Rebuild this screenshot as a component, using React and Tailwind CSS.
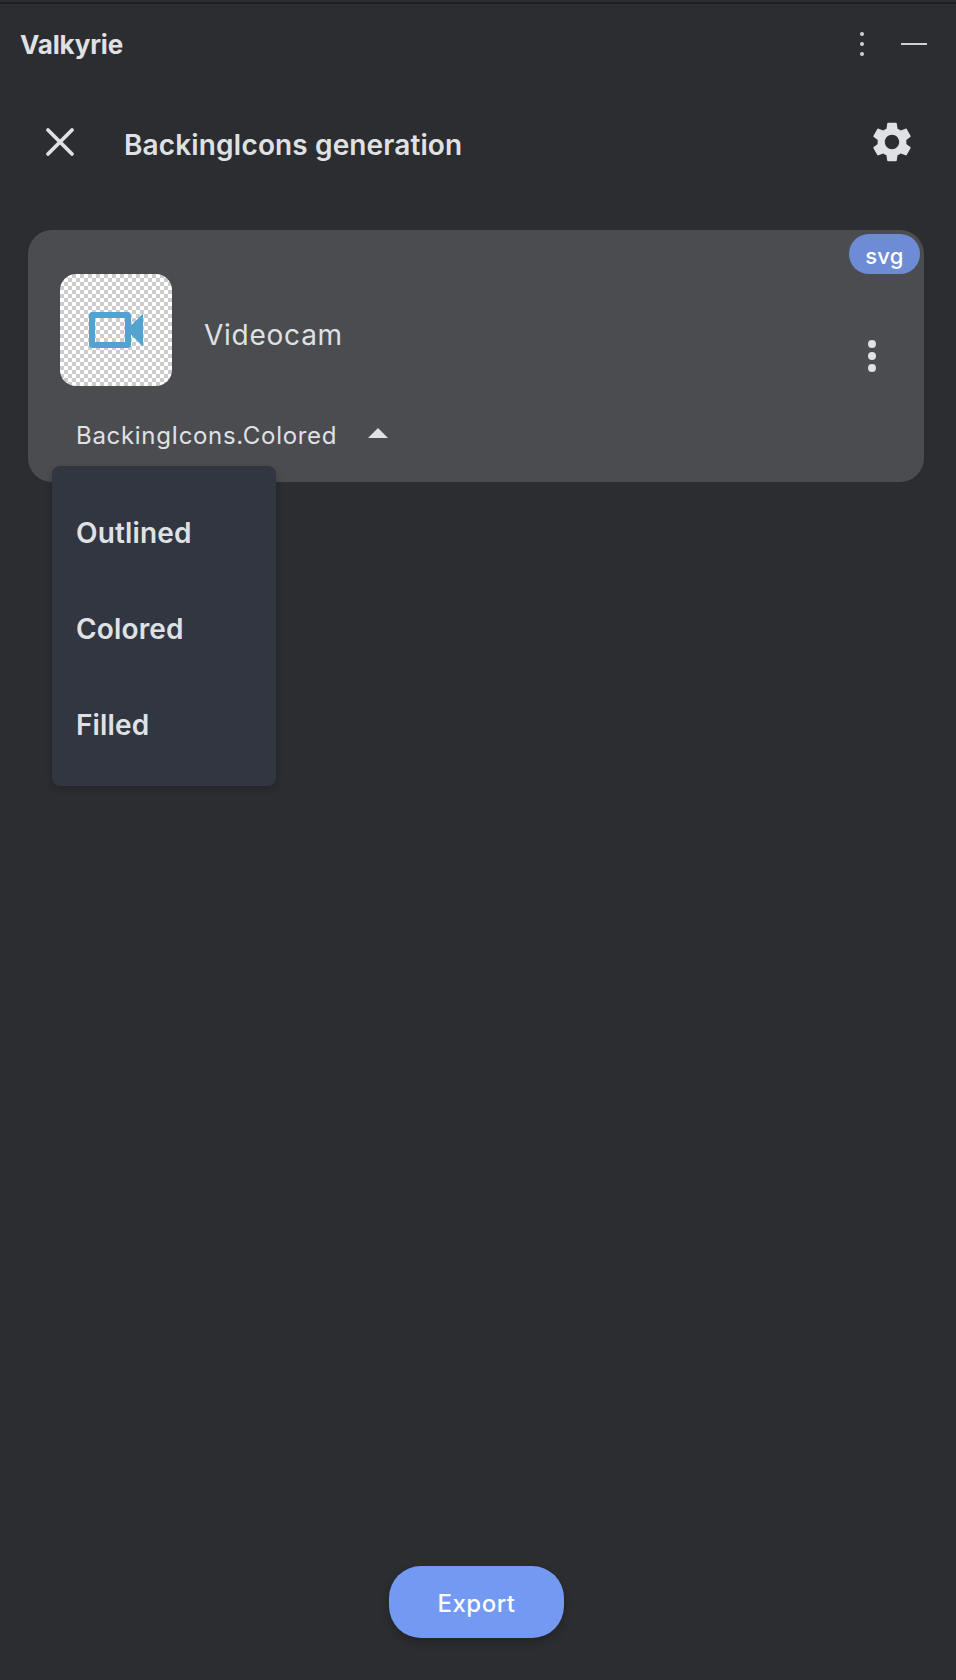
const MENU_ITEMS = ["Outlined", "Colored", "Filled"];

function WindowBar() {
  return (
    <div className="flex h-20 items-center justify-between pl-5 pr-[23px]">
      <h1 className="pt-0.5 text-[26px] font-bold leading-8 tracking-[-0.15px]">Valkyrie</h1>
      <div className="flex items-center gap-[35px]">
        <svg className="h-6 w-2 fill-[#ced0d6]" viewBox="0 0 8 24">
          <circle cx="4" cy="2" r="2" />
          <circle cx="4" cy="12" r="2" />
          <circle cx="4" cy="22" r="2" />
        </svg>
        <svg className="h-6 w-8 fill-[#ced0d6]" viewBox="0 0 32 24">
          <rect x="0" y="11" width="26" height="2" />
        </svg>
      </div>
    </div>
  );
}

function Toolbar() {
  return (
    <div className="flex h-[116px] items-center pl-9 pr-10">
      <svg className="size-12 fill-none stroke-current" viewBox="0 0 24 24" strokeWidth="1.9" strokeLinecap="round">
        <path d="M6 6 18 18M18 6 6 18" />
      </svg>
      <h2 className="ml-10 flex-1 pt-1.5 text-[28px] font-semibold leading-9 tracking-[0.12px]">BackingIcons generation</h2>
      <svg className="size-12 fill-current" viewBox="0 0 24 24">
        <path d="M19.14 12.94c.04-.3.06-.61.06-.94 0-.32-.02-.64-.07-.94l2.03-1.58c.18-.14.23-.41.12-.61l-1.92-3.32c-.12-.22-.37-.29-.59-.22l-2.39.96c-.5-.38-1.03-.7-1.62-.94l-.36-2.54c-.04-.24-.24-.41-.48-.41h-3.84c-.24 0-.43.17-.47.41l-.36 2.54c-.59.24-1.13.57-1.62.94l-2.39-.96c-.22-.08-.47 0-.59.22L2.74 8.87c-.12.21-.08.47.12.61l2.03 1.58c-.05.3-.09.63-.09.94s.02.64.07.94l-2.03 1.58c-.18.14-.23.41-.12.61l1.92 3.32c.12.22.37.29.59.22l2.39-.96c.5.38 1.03.7 1.62.94l.36 2.54c.05.24.24.41.48.41h3.84c.24 0 .44-.17.47-.41l.36-2.54c.59-.24 1.13-.56 1.62-.94l2.39.96c.22.08.47 0 .59-.22l1.92-3.32c.12-.22.07-.47-.12-.61zM12 15.6c-1.98 0-3.6-1.62-3.6-3.6s1.62-3.6 3.6-3.6 3.6 1.62 3.6 3.6-1.62 3.6-3.6 3.6" />
      </svg>
    </div>
  );
}

function PackMenu() {
  return (
    <ul className="absolute left-6 top-[236px] flex h-80 w-56 flex-col rounded-lg bg-[#323640] py-4 shadow-[0_3px_6px_rgba(0,0,0,0.22)]">
      {MENU_ITEMS.map((item) => (
        <li key={item} className="flex h-24 items-center px-6 pt-1.5 text-[28px] font-semibold leading-9 tracking-[0.15px]">
          {item}
        </li>
      ))}
    </ul>
  );
}

function IconCard() {
  return (
    <section className="relative ml-7 mr-8 mt-[30px] flex h-[252px] flex-col rounded-3xl bg-[#4b4c4f] px-8 pt-11">
      <div className="flex items-center">
        <div className="size-28 rounded-2xl bg-[repeating-conic-gradient(#ccc_0_25%,#fff_0_50%)] bg-[length:8px_8px] p-5">
          <svg className="size-[72px] fill-[#54a3ce]" viewBox="0 0 24 24">
            <path d="M15 8v8H5V8h10m1-2H4c-.55 0-1 .45-1 1v10c0 .55.45 1 1 1h12c.55 0 1-.45 1-1v-3.500l4 4v-11l-4 4V7c0-.55-.45-1-1-1z" />
          </svg>
        </div>
        <span className="ml-8 flex-1 pt-2.5 text-[28px] leading-9 tracking-[0.75px]">Videocam</span>
      </div>
      <button className="ml-4 mt-6 flex items-center text-left">
        <span className="w-[262px] whitespace-nowrap pt-1 text-2xl tracking-[0.68px]">BackingIcons.Colored</span>
        <svg className="ml-4 size-12 fill-current" viewBox="0 0 24 24">
          <path d="m7 14 5-5 5 5z" />
        </svg>
      </button>
      <span className="absolute right-1 top-1 flex h-10 w-[71px] items-center justify-center rounded-[20px] bg-[#6e8bd6] pt-1 text-[22px] font-medium tracking-[0.3px] text-white">
        svg
      </span>
      <svg className="absolute right-7 top-[102px] size-12 fill-current" viewBox="0 0 24 24">
        <circle cx="12" cy="6" r="2" />
        <circle cx="12" cy="12" r="2" />
        <circle cx="12" cy="18" r="2" />
      </svg>
      <PackMenu />
    </section>
  );
}

export default function App() {
  return (
    <main className="flex h-[1680px] w-full flex-col bg-[#2b2d30] pt-0.5 font-['Inter',sans-serif] text-[#dfe1e5]">
      <div className="h-0.5 shrink-0 bg-[#1e1f22]" />
      <WindowBar />
      <Toolbar />
      <IconCard />
      <button className="mb-[42px] ml-[389px] mt-auto flex h-[72px] w-[175px] items-center justify-center rounded-[32px] bg-[#7499f3] pt-1 text-2xl font-medium tracking-[0.5px] text-white shadow-[0_4px_10px_rgba(0,0,0,0.22)]">
        Export
      </button>
    </main>
  );
}
